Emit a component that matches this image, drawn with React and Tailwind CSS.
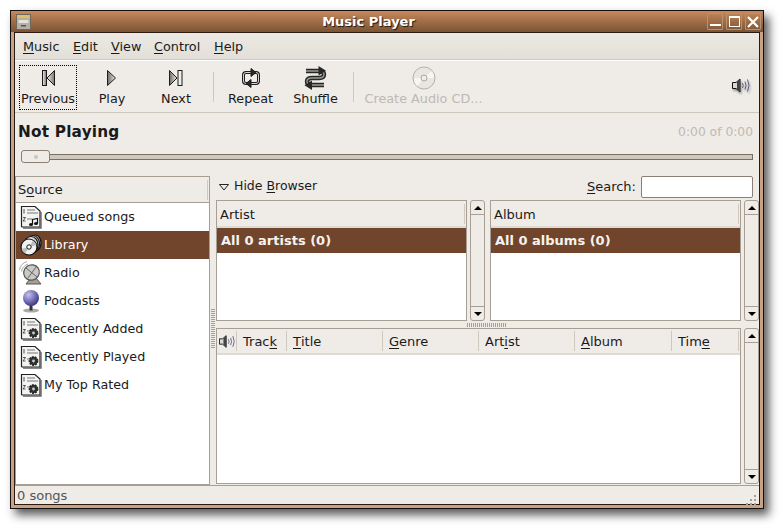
import React from 'react';

const FONT = "font-['DejaVu_Sans',sans-serif]";

// GTK mnemonic underline
const U = ({ children }) => <span className="underline underline-offset-2 decoration-1">{children}</span>;

const PrevIcon = () => (
  <svg width="16" height="18" viewBox="0 0 16 18">
    <defs>
      <linearGradient id="g1" x1="0" x2="1"><stop offset="0" stopColor="#f2f2f0" /><stop offset="1" stopColor="#77746f" /></linearGradient>
    </defs>
    <rect x="2.5" y="1.5" width="4" height="15" fill="url(#g1)" stroke="#1c1c1c" />
    <path d="M14.5 1.5V16.5L7 9Z" fill="url(#g1)" stroke="#1c1c1c" />
  </svg>
);

const PlayIcon = () => (
  <svg width="12" height="18" viewBox="0 0 12 18">
    <defs>
      <linearGradient id="g2" x1="0" x2="1"><stop offset="0" stopColor="#6f6c68" /><stop offset="1" stopColor="#e8e8e6" /></linearGradient>
    </defs>
    <path d="M1.5 1.5V16.5L9.5 9Z" fill="url(#g2)" stroke="#1c1c1c" />
  </svg>
);

const NextIcon = () => (
  <svg width="16" height="18" viewBox="0 0 16 18">
    <path d="M1.5 1.5V16.5L9 9Z" fill="url(#g2)" stroke="#1c1c1c" />
    <rect x="10" y="1.5" width="4" height="15" fill="#eeeeec" stroke="#1c1c1c" />
  </svg>
);

const RepeatIcon = () => (
  <svg width="18" height="22" viewBox="0 0 18 22" fill="none">
    <rect x="1.5" y="5.500" width="15" height="11" rx="2.500" stroke="#1d1d1d" strokeWidth="3" />
    <rect x="1.500" y="5.500" width="15" height="11" rx="2.500" stroke="#d4d4d0" strokeWidth="1" />
    <path d="M9 1.500L14 5.500L9 9.500Z" fill="#2a2a2a" stroke="#1d1d1d" />
    <path d="M9 12.500L4 16.500L9 20.500Z" fill="#2a2a2a" stroke="#1d1d1d" />
  </svg>
);

const ShuffleIcon = () => (
  <svg width="23" height="24" viewBox="0 0 23 24" fill="none">
    <path d="M2 5H15Q20 5 20 8.500Q20 12 15 12H8Q3 12 3 15.500Q3 19 8 19H20" stroke="#262626" strokeWidth="4.400" />
    <path d="M2 5H15Q20 5 20 8.500Q20 12 15 12H8Q3 12 3 15.500Q3 19 8 19H20" stroke="#9a9a96" strokeWidth="1.400" />
    <path d="M14.500 0L22 4.750L14.500 9.500Z" fill="#262626" />
    <path d="M8 14.500L0.500 19.250L8 24Z" fill="#262626" />
  </svg>
);

const CdIcon = () => (
  <svg width="24" height="24" viewBox="0 0 24 24">
    <circle cx="12" cy="12" r="11" fill="#e9e6e1" stroke="#b5b2ad" />
    <path d="M12 12L20 5A11 11 0 0 1 22 12Z" fill="#f7f6f4" />
    <path d="M12 12L2 12A11 11 0 0 0 5 20Z" fill="#f7f6f4" />
    <circle cx="12" cy="12" r="3" fill="#efebe7" stroke="#aaa7a2" />
  </svg>
);

const SpeakerIcon = ({ shadow }) => (
  <svg width="19" height="15" viewBox="0 0 19 15" fill="none" className={shadow ? 'drop-shadow-[1px_2px_1px_rgba(0,0,0,0.35)]' : ''}>
    <path d="M0.500 4.500H4L8 1V14L4 10.500H0.500Z" fill="#d8d8d4" stroke="#111" />
    <path d="M5 4L8 1V14L5 11Z" fill="#444" />
    <path d="M10.500 5Q12 7.500 10.500 10M13 3.500Q15 7.500 13 11.500M15.500 1.500Q18.500 7.500 15.500 13.500" stroke="#5c5a86" />
  </svg>
);

const DocBase = ({ children }) => (
  <svg width="22" height="24" viewBox="0 0 22 24" fill="none">
    <path d="M1.500 1.500H15L20 6V22H2.500Q1.500 22 1.500 21Z" fill="#f3f3f1" stroke="#222" strokeWidth="1.200" />
    <path d="M21 7V23H3" stroke="#666" strokeWidth="1.400" />
    <path d="M7 5H15M7 8H18M7 14H12" stroke="#777" />
    <path d="M4 4V8.500M3 12.500H5.500L3 16H5.500" stroke="#555" />
    {children}
  </svg>
);

const QueueIcon = () => (
  <DocBase>
    <path d="M12.500 19.500V14.500L17.500 13.500V18.500" stroke="#111" strokeWidth="1.200" />
    <ellipse cx="11" cy="19.500" rx="2" ry="1.500" fill="#111" />
    <ellipse cx="16" cy="18.500" rx="2" ry="1.500" fill="#111" />
  </DocBase>
);

const GearIcon = () => (
  <DocBase>
    <circle cx="13.500" cy="16" r="4" fill="#333" stroke="#222" strokeWidth="1.800" strokeDasharray="1.800 1" />
    <circle cx="13.500" cy="16" r="1.400" fill="#cfcfcc" />
  </DocBase>
);

const LibraryIcon = () => (
  <svg width="22" height="24" viewBox="0 0 22 24" fill="none">
    <ellipse cx="15.500" cy="10" rx="5.500" ry="8" fill="#bdbdbb" stroke="#111" strokeWidth="1.200" />
    <ellipse cx="13" cy="11" rx="6.500" ry="8.500" fill="#d2d2d0" stroke="#111" strokeWidth="1.200" />
    <ellipse cx="11" cy="12" rx="7" ry="8.500" fill="#dedede" stroke="#111" strokeWidth="1.200" />
    <circle cx="9" cy="14" r="8" fill="#f0f0ee" stroke="#111" strokeWidth="1.200" />
    <path d="M9 14L13 7.500A8 8 0 0 1 16.500 12Z" fill="#bcbcba" />
    <path d="M9 14L5 20.500A8 8 0 0 1 1.500 16Z" fill="#bcbcba" />
    <circle cx="9" cy="14" r="2.200" fill="#fff" stroke="#111" />
  </svg>
);

const RadioIcon = () => (
  <svg width="23" height="24" viewBox="0 0 23 24" fill="none">
    <path d="M0.500 9Q1.500 2.500 8 0.500M2.500 10.500Q3.500 5 9 3M4.500 12Q5 7.500 9.500 5.500" stroke="#a9a9a7" />
    <path d="M11 18L7 23H22L17 17Z" fill="#a79f94" stroke="#555" />
    <ellipse cx="12.500" cy="11.500" rx="8" ry="7.500" transform="rotate(-35 12.500 11.500)" fill="#c9c9c7" stroke="#555" strokeWidth="1.200" />
    <path d="M7 7L18 16M17 6L9 17" stroke="#666" />
  </svg>
);

const GlobeIcon = () => (
  <svg width="24" height="24" viewBox="0 0 24 24" fill="none">
    <defs>
      <radialGradient id="gb" cx="0.350" cy="0.300" r="0.800"><stop offset="0" stopColor="#c4c2ec" /><stop offset="0.600" stopColor="#6864ae" /><stop offset="1" stopColor="#2f2c66" /></radialGradient>
    </defs>
    <ellipse cx="12" cy="21.500" rx="8" ry="2" fill="#aaa" />
    <path d="M12 16V21.500" stroke="#333" strokeWidth="3" />
    <circle cx="12" cy="9" r="8" fill="url(#gb)" />
  </svg>
);

const HideArrow = () => (
  <svg width="10" height="7" viewBox="0 0 10 7" className="ml-[3px] mr-[5px]">
    <path d="M0.500 0.500H9.500L5 6Z" fill="#efebe7" stroke="#222" />
  </svg>
);

const sources = [
  { name: 'Queued songs', Icon: QueueIcon },
  { name: 'Library', Icon: LibraryIcon, selected: true },
  { name: 'Radio', Icon: RadioIcon },
  { name: 'Podcasts', Icon: GlobeIcon },
  { name: 'Recently Added', Icon: GearIcon },
  { name: 'Recently Played', Icon: GearIcon },
  { name: 'My Top Rated', Icon: GearIcon },
];

const ToolButton = ({ w, label, icon, focus, disabled }) => (
  <div className={`flex flex-col items-center ${w}`}>
    <div className={`flex flex-col items-center justify-between h-[45px] w-[58px] whitespace-nowrap ${focus ? 'border border-dotted border-black' : 'border border-transparent'}`}>
      <div className="h-[25px] flex items-center justify-center">{icon}</div>
      <span className={`text-[12.800px] leading-[15px] mb-[3px] ${disabled ? 'text-[#bdb9b3]' : 'text-[#1a1a1a]'}`}>{label}</span>
    </div>
  </div>
);

const Sep = () => (
  <div className="w-[10px] flex justify-center items-center"><div className="w-[1px] h-[30px] bg-[#cfc8bf]" /></div>
);

const Scrollbar = ({ className }) => (
  <div className={`w-[15px] flex flex-col justify-between border border-[#a89f94] rounded-[3px] bg-[#efebe7] ${className}`}>
    <div className="h-[14px] border-b border-[#a89f94] flex items-center justify-center">
      <div className="w-0 h-0 border-x-[4px] border-x-transparent border-b-[4px] border-b-black" />
    </div>
    <div className="h-[14px] border-t border-[#a89f94] flex items-center justify-center">
      <div className="w-0 h-0 border-x-[4px] border-x-transparent border-t-[4px] border-t-black" />
    </div>
  </div>
);

const BrowserList = ({ title, row, className }) => (
  <div className={`flex flex-col border border-[#a89f94] bg-white w-[251px] ${className}`}>
    <div className="h-[27px] bg-[#efebe7] border-b-[2px] border-b-[#dfdad3] flex items-center justify-between pl-[3px] pr-[1px]">
      <span className="text-[13px] text-[#1a1a1a] pt-[2px]">{title}</span>
      <div className="w-[1px] h-[20px] bg-[#cfc8bf]" />
    </div>
    <div className="h-[25px] bg-[#70452b] flex items-center pl-[4px] text-[13px] font-bold text-[#f5f2ee]">{row}</div>
  </div>
);

const columns = [
  { w: 'w-[20px]', icon: true },
  { w: 'w-[50px]', label: <>Trac<U>k</U></> },
  { w: 'w-[96px]', label: <><U>T</U>itle</> },
  { w: 'w-[96px]', label: <><U>G</U>enre</> },
  { w: 'w-[96px]', label: <>Art<U>i</U>st</> },
  { w: 'w-[97px]', label: <><U>A</U>lbum</> },
  { w: 'w-[67px]', label: <>Tim<U>e</U></> },
];

export default function App() {
  return (
    <div className={`w-[784px] h-[530px] bg-white overflow-hidden pt-[10px] pl-[10px] ${FONT}`}>
      <div className="relative w-[754px] h-[499px] border border-[#111] bg-[#c9a184] flex flex-col shadow-[5px_6px_9px_rgba(0,0,0,0.65)]">
        {/* title bar */}
        <div className="h-[21px] shrink-0 flex items-center justify-between pl-[5px] pr-[2px] bg-gradient-to-b from-[#c8885b] to-[#7a5435]">
          <svg width="15" height="16" viewBox="0 0 15 16">
            <rect x="0.500" y="0.500" width="14" height="15" fill="#b5b0a3" stroke="#6d675c" />
            <rect x="1" y="1" width="13" height="3" fill="#e0c060" />
            <rect x="2.500" y="6" width="10" height="3" fill="#e3e2dd" />
            <rect x="5" y="11" width="5" height="1.500" fill="#555" />
          </svg>
          <span className="text-[13px] font-bold text-white [text-shadow:1px_1px_1px_rgba(0,0,0,0.8)] ml-[-1px]">Music Player</span>
          <div className="flex gap-[3px]">
            <div className="w-[16px] h-[17px] border border-[#b8926f] rounded-[1px] flex items-end justify-center pb-[3px]"><div className="w-[11px] h-[2px] bg-white" /></div>
            <div className="w-[16px] h-[17px] border border-[#b8926f] rounded-[1px] flex items-center justify-center"><div className="w-[11px] h-[11px] border border-white border-t-2" /></div>
            <div className="w-[16px] h-[17px] border border-[#b8926f] rounded-[1px] flex items-center justify-center">
              <svg width="12" height="12" viewBox="0 0 12 12"><path d="M1 1L11 11M11 1L1 11" stroke="#fff" strokeWidth="2.200" /></svg>
            </div>
          </div>
        </div>

        <div className="flex-1 min-h-0 px-[3px] pb-[3px] flex">
          <div className="flex-1 min-w-0 border border-[#2a1a10] bg-[#efebe7] flex flex-col">
            {/* menu bar */}
            <div className="h-[27px] shrink-0 flex items-center pl-[8px] pt-[2px] text-[12.800px] text-[#1a1a1a] bg-gradient-to-b from-[#ece9e4] to-[#e3dfd8] border-b border-[#cfc8bf]">
              <span className="w-[50px]"><U>M</U>usic</span>
              <span className="w-[38px]"><U>E</U>dit</span>
              <span className="w-[43px]"><U>V</U>iew</span>
              <span className="w-[60px]"><U>C</U>ontrol</span>
              <span><U>H</U>elp</span>
            </div>

            {/* toolbar */}
            <div className="h-[53px] shrink-0 flex items-center pl-[1px] pt-[1px] border-t border-white border-b border-b-[#cfc8bf]">
              <ToolButton w="w-[64px]" label="Previous" icon={<PrevIcon />} focus />
              <ToolButton w="w-[64px]" label="Play" icon={<PlayIcon />} />
              <ToolButton w="w-[64px]" label="Next" icon={<NextIcon />} />
              <Sep />
              <ToolButton w="w-[65px]" label="Repeat" icon={<RepeatIcon />} />
              <ToolButton w="w-[65px]" label="Shuffle" icon={<ShuffleIcon />} />
              <Sep />
              <ToolButton w="w-[131px]" label="Create Audio CD..." icon={<CdIcon />} disabled />
              <div className="flex-1 flex justify-end pr-[8px] pb-[4px]"><SpeakerIcon shadow /></div>
            </div>

            {/* now playing */}
            <div className="h-[63px] shrink-0 flex flex-col px-[3px]">
              <div className="h-[36px] flex items-center justify-between pt-[2px]">
                <span className="text-[15.300px] font-bold text-[#1a1a1a] tracking-[0.2px]">Not Playing</span>
                <span className="text-[12.300px] text-[#bdb9b3] mr-[3px]">0:00 of 0:00</span>
              </div>
              <div className="relative h-[13px] mx-[3px] mt-[1px] flex items-center">
                <div className="w-full h-[6px] border border-[#7a6e60] bg-[#cfc8bf]" />
                <div className="absolute left-0 top-0 w-[29px] h-[13px] rounded-[3px] border border-[#8a7f72] bg-[#efebe7] flex items-center justify-center">
                  <div className="w-[4px] h-[4px] rounded-full bg-[#c9c5bf]" />
                </div>
              </div>
            </div>

            {/* main */}
            <div className="h-[309px] shrink-0 flex">
              <div className="w-[195px] border border-[#a89f94] bg-white flex flex-col">
                <div className="h-[26px] shrink-0 bg-[#efebe7] border-b border-[#a89f94] flex items-center justify-between pl-[2px] pr-[1px]">
                  <span className="text-[13px] text-[#1a1a1a]">S<U>o</U>urce</span>
                  <div className="w-[1px] h-[20px] bg-[#cfc8bf]" />
                </div>
                {sources.map(({ name, Icon, selected }) => (
                  <div key={name} className={`h-[28px] shrink-0 flex items-center pl-[1px] text-[12.700px] ${selected ? 'bg-[#70452b] text-white' : 'text-[#1a1a1a]'}`}>
                    <div className="w-[27px] flex justify-center"><Icon /></div>
                    <span>{name}</span>
                  </div>
                ))}
              </div>

              <div className="relative flex-1 min-w-0 pl-[6px] flex flex-col">
                {/* vertical paned grip */}
                <div className="absolute left-[1px] top-[133px] w-[4px] h-[40px] bg-[repeating-linear-gradient(to_bottom,#a89f94_0,#a89f94_1px,transparent_1px,transparent_2px)]" />
                {/* horizontal paned grip */}
                <div className="absolute left-[257px] top-[147px] w-[40px] h-[4px] bg-[repeating-linear-gradient(to_right,#a89f94_0,#a89f94_1px,transparent_1px,transparent_2px)]" />

                <div className="h-[24px] shrink-0 flex items-center pb-[2px] text-[13px] text-[#1a1a1a]">
                  <HideArrow />
                  <span className="text-[12.500px] pb-[2px]">Hide <U>B</U>rowser</span>
                  <div className="flex-1" />
                  <span className="mr-[5px]"><U>S</U>earch:</span>
                  <div className="w-[112px] h-[22px] bg-white border border-[#8a7f72] rounded-[2px] mr-[6px]" />
                </div>

                <div className="h-[121px] shrink-0 flex">
                  <BrowserList title="Artist" row="All 0 artists (0)" />
                  <Scrollbar className="ml-[3px]" />
                  <BrowserList title="Album" row="All 0 albums (0)" className="ml-[5px]" />
                  <Scrollbar className="ml-[3px]" />
                </div>

                <div className="h-[156px] shrink-0 flex mt-[7px]">
                  <div className="w-[525px] border border-[#a89f94] bg-white flex flex-col">
                    <div className="h-[26px] shrink-0 bg-[#efebe7] border-b-[2px] border-b-[#dfdad3] flex items-center text-[13px] text-[#1a1a1a]">
                      {columns.map((c, i) => (
                        <div key={i} className={`${c.w} h-[20px] flex items-center border-r border-[#cfc8bf] ${c.icon ? 'pl-[2px]' : 'pl-[6px] pt-[2px]'}`}>
                          {c.icon ? <SpeakerIcon /> : c.label}
                        </div>
                      ))}
                    </div>
                  </div>
                  <Scrollbar className="ml-[3px]" />
                </div>
              </div>
            </div>

            {/* status bar */}
            <div className="flex-1 relative flex items-center pl-[2px] pb-[3px] text-[13px] text-[#555] border-t border-[#a89f94]">
              0 songs
              <svg className="absolute right-[1px] bottom-[1px]" width="14" height="14" viewBox="0 0 14 14" fill="#a89f94">
                <rect x="10" y="1" width="2" height="2" />
                <rect x="6" y="5" width="2" height="2" /><rect x="10" y="5" width="2" height="2" />
                <rect x="2" y="9" width="2" height="2" /><rect x="6" y="9" width="2" height="2" /><rect x="10" y="9" width="2" height="2" />
              </svg>
            </div>
          </div>
        </div>
      </div>
    </div>
  );
}
